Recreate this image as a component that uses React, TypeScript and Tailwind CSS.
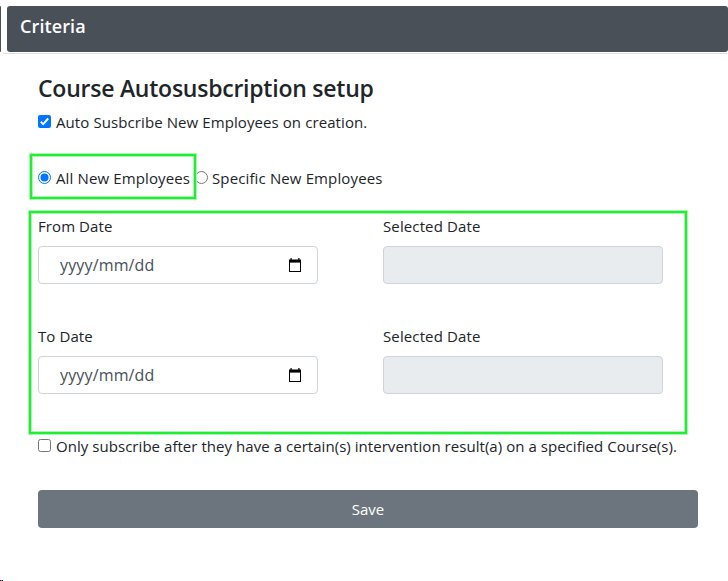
import React from "react";

function Label({ children, className = "text-[15px]" }: { children: React.ReactNode; className?: string }) {
  return <span className={`leading-6 whitespace-nowrap ${className}`}>{children}</span>;
}

function CheckBox({ checked = false }: { checked?: boolean }) {
  return (
    <svg viewBox="0 0 13 13" className="mr-[5px] mb-[2px] h-[13px] w-[13px] shrink-0">
      {checked ? (
        <>
          <rect width="13" height="13" rx="2" fill="#0075ff" />
          <path d="M2.8 6.7 5.2 9.1 10.2 3.5" fill="none" stroke="#fff" strokeWidth="2" />
        </>
      ) : (
        <rect x=".5" y=".5" width="12" height="12" rx="2" fill="#fff" stroke="#767676" />
      )}
    </svg>
  );
}

function Radio({ checked = false }: { checked?: boolean }) {
  return (
    <svg viewBox="0 0 13 13" className="mr-[5px] mb-[2px] h-[13px] w-[13px] shrink-0">
      <circle cx="6.5" cy="6.5" r="6" fill="#fff" stroke={checked ? "#0075ff" : "#767676"} />
      {checked && <circle cx="6.5" cy="6.5" r="4" fill="#0075ff" />}
    </svg>
  );
}

function CalendarIcon() {
  return (
    <svg viewBox="0 0 14 15" className="h-[15px] w-[14px]">
      <path d="M2.5 0h1.2v1.5h6.6V0h1.2v1.5H13V14H1V1.5h1.5z" fill="#000" />
      <path d="M2 4.6h10V13H2z" fill="#fff" />
    </svg>
  );
}

function DateRow({ label }: { label: string }) {
  return (
    <div className="flex h-[110px] gap-[65px]">
      <div className="w-[280px]">
        <div className="h-8">
          <Label className="text-[15px] tracking-[0.08px]">{label}</Label>
        </div>
        <div className="flex h-[38px] items-center justify-between rounded border border-[#ced4da] bg-white pr-[15px] pl-[21px] text-[#495057]">
          <Label className="text-base tracking-[0.15px]">yyyy/mm/dd</Label>
          <CalendarIcon />
        </div>
      </div>
      <div className="w-[280px]">
        <div className="h-8">
          <Label className="text-[15px] tracking-[0.12px]">Selected Date</Label>
        </div>
        <div className="h-[38px] rounded border border-[#ced4da] bg-[#e9ecef]" />
      </div>
    </div>
  );
}

export default function App() {
  return (
    <div className="relative h-[581px] w-[728px] overflow-hidden bg-white font-['Open_Sans','Noto_Sans',sans-serif] text-[#212529]">
      <div className="flex h-[52px] gap-[6px] pt-[6px]">
        <div className="w-px rounded-r-[1px] bg-[#495057]" />
        <header className="flex-1 rounded-[3px] bg-[#495057] pt-[5px] pl-[13px] text-lg leading-[30px] font-semibold tracking-[0.1px] text-white">
          Criteria
        </header>
      </div>
      <div className="mt-px ml-[3px] h-px bg-[#dfdfdf]" />
      <main className="w-[698px] pt-5 pl-[38px]">
        <h1 className="h-[29px] text-[23px] leading-[29px] font-semibold tracking-[-0.24px] whitespace-nowrap">Course Autosusbcription setup</h1>
        <div className="mt-[7px] flex h-6 items-center">
          <CheckBox checked />
          <Label className="text-[15px] tracking-[0.09px]">Auto Susbcribe New Employees on creation.</Label>
        </div>
        <div className="mt-8 flex h-6 items-center">
          <div className="flex w-[157px] items-center">
            <Radio checked />
            <Label className="text-[15px] tracking-[0.13px]">All New Employees</Label>
          </div>
          <Radio />
          <Label className="-ml-px text-[15px] tracking-[0.13px]">Specific New Employees</Label>
        </div>
        <div className="mt-6">
          <DateRow label="From Date" />
          <DateRow label="To Date" />
        </div>
        <div className="flex h-6 items-center">
          <CheckBox />
          <Label className="text-[15px] tracking-[0.045px]">Only subscribe after they have a certain(s) intervention result(a) on a specified Course(s).</Label>
        </div>
        <button className="mt-8 flex h-[38px] w-full items-center justify-center rounded bg-[#6c757d] text-white">
          <Label>Save</Label>
        </button>
      </main>
      <div className="absolute top-[154px] left-[30px] h-[45px] w-[166px] border-2 border-[#22ed35] shadow-[0_0_0_1px_#a7f8ae,inset_0_0_0_1px_#a7f8ae]" />
      <div className="absolute top-[211px] left-[29px] h-[223px] w-[658px] border-2 border-[#22ed35] shadow-[0_0_0_1px_#a7f8ae,inset_0_0_0_1px_#a7f8ae]" />
      <div className="absolute bottom-0 left-0 flex">
        <i className="h-px w-px bg-[#a00000]" />
        <i className="h-px w-px bg-[#30b050]" />
        <i className="h-px w-px bg-[#0000c0]" />
      </div>
    </div>
  );
}
